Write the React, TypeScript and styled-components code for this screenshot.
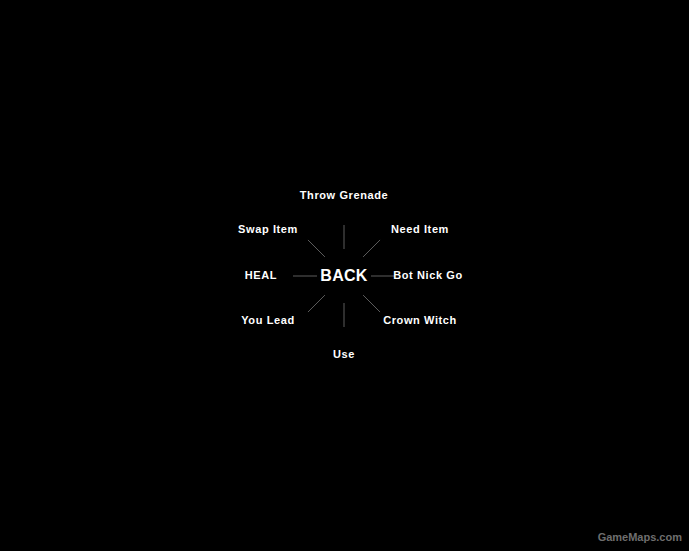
import React from "react";
import styled, { createGlobalStyle } from "styled-components";

const Global = createGlobalStyle`
  html, body { margin: 0; padding: 0; background: #000; }
  #root { width: 689px; height: 551px; }
`;

const Screen = styled.div`
  position: relative;
  width: 689px;
  height: 551px;
  background: #000;
  display: flex;
  align-items: center;
  justify-content: center;
  overflow: hidden;
`;

const Wheel = styled.div`
  position: relative;
  width: 240px;
  height: 200px;
  margin-left: -1px;
`;

const Spokes = styled.svg`
  position: absolute;
  left: 0;
  top: 0;
  width: 240px;
  height: 200px;
`;

const Label = styled.div<{ $big?: boolean }>`
  position: absolute;
  transform: translate(-50%, -50%);
  white-space: nowrap;
  color: #fff;
  font-family: "Liberation Sans", Arial, sans-serif;
  font-weight: bold;
  font-size: ${(p) => (p.$big ? "16px" : "11px")};
  letter-spacing: ${(p) => (p.$big ? "0.3px" : "0.6px")};
  line-height: 1;
`;

const Watermark = styled.div`
  position: absolute;
  right: 7px;
  bottom: 8px;
  color: #6e6e6e;
  font-family: "Liberation Sans", Arial, sans-serif;
  font-weight: bold;
  font-size: 11px;
`;

const CX = 120;
const CY = 100;

const items: { text: string; dx: number; dy: number }[] = [
  { text: "Throw Grenade", dx: 0, dy: -81 },
  { text: "Need Item", dx: 76, dy: -47 },
  { text: "Bot Nick Go", dx: 84, dy: -1 },
  { text: "Crown Witch", dx: 76, dy: 44 },
  { text: "Use", dx: 0, dy: 78 },
  { text: "You Lead", dx: -76, dy: 44 },
  { text: "HEAL", dx: -83, dy: -1 },
  { text: "Swap Item", dx: -76, dy: -47 },
];

export default function App() {
  const angles = [0, 45, 90, 135, 180, 225, 270, 315];
  return (
    <Screen>
      <Global />
      <Wheel>
        <Spokes viewBox="0 0 240 200">
          {angles.map((a) => {
            const r = (a * Math.PI) / 180;
            const c = Math.cos(r);
            const s = Math.sin(r);
            return (
              <line
                key={a}
                x1={CX + c * 27}
                y1={CY + s * 27}
                x2={CX + c * 51}
                y2={CY + s * 51}
                stroke="#5c5c5c"
                strokeWidth={1}
              />
            );
          })}
        </Spokes>
        {items.map((it) => (
          <Label key={it.text} style={{ left: CX + it.dx, top: CY + it.dy }}>
            {it.text}
          </Label>
        ))}
        <Label $big style={{ left: CX, top: CY }}>
          BACK
        </Label>
      </Wheel>
      <Watermark>GameMaps.com</Watermark>
    </Screen>
  );
}
